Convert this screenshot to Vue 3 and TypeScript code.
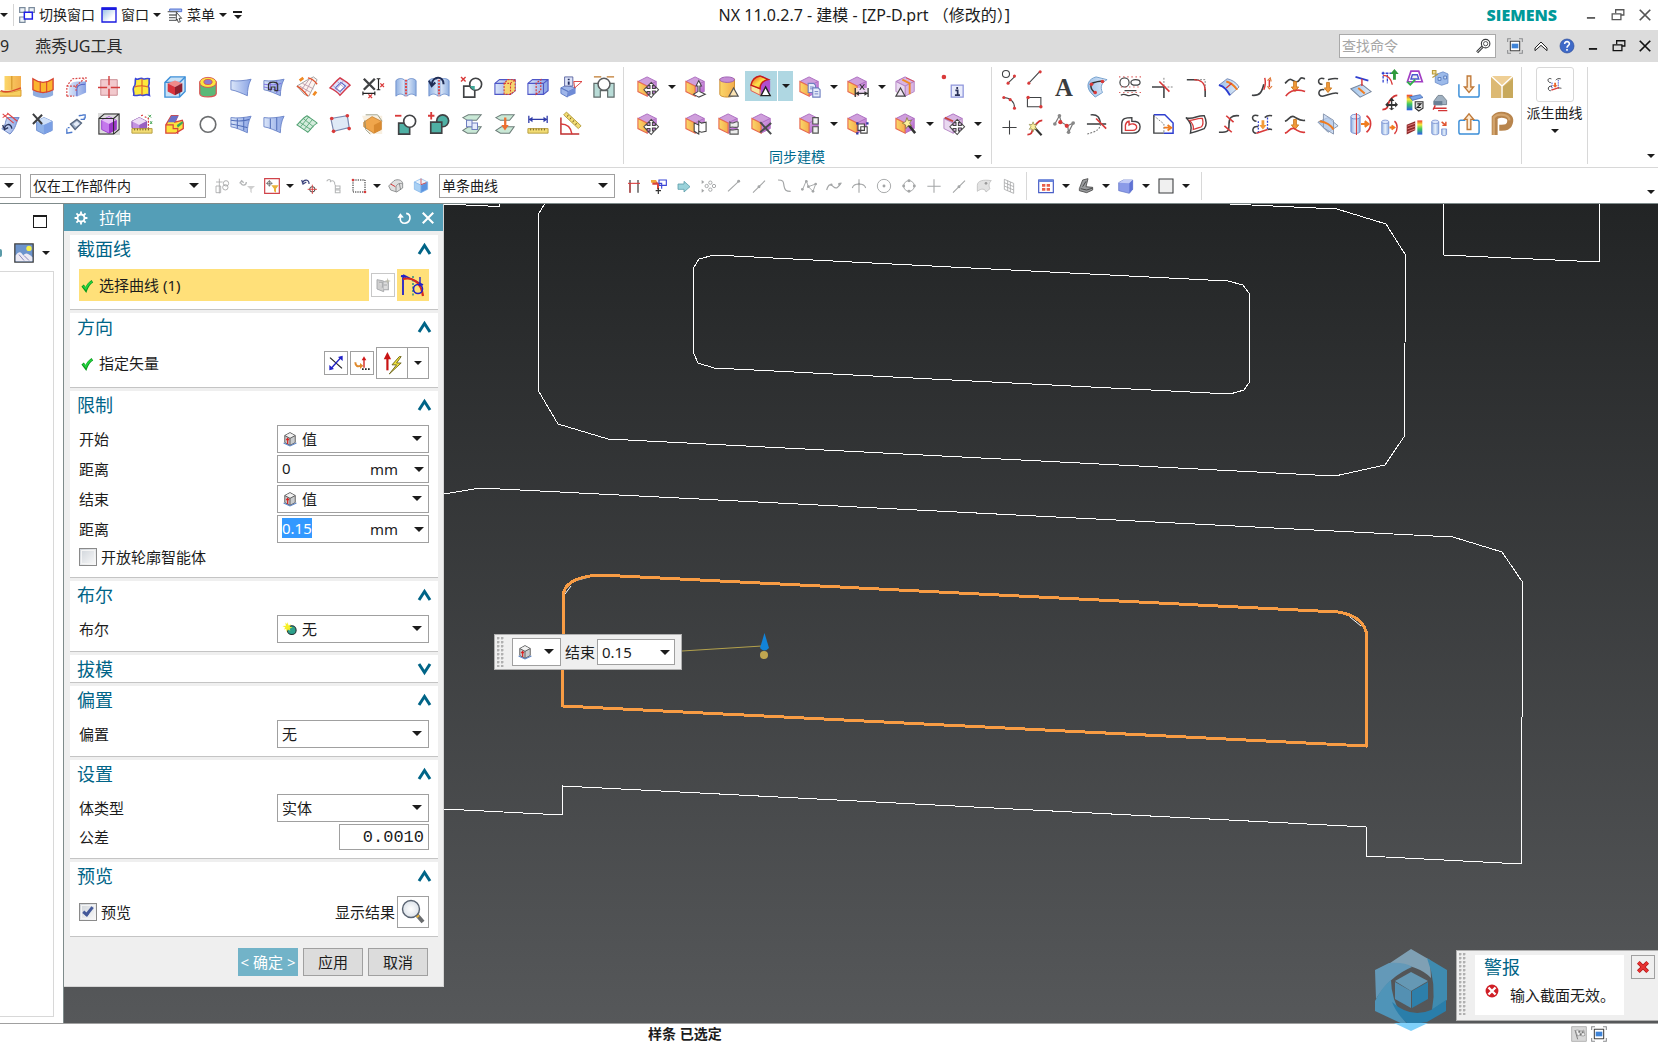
<script setup lang="ts">
import { onMounted, reactive, ref } from 'vue'

interface Tool {
  icon: string
  label: string
  menu?: boolean
  active?: boolean
}

type RowKind = 'pick' | 'vector' | 'select' | 'length' | 'check' | 'number' | 'preview'

interface Row {
  kind: RowKind
  id: string
  label: string
  value?: string
  icon?: string
}

interface Section {
  title: string
  open: boolean
  rows: Row[]
}

/* ---------- icon drawing helpers, all on a 24 x 24 grid ---------- */
const line = (d: string, stroke = '#404244', width = 1.5, fill = 'none', extra = '') =>
  `<path d="${d}" stroke="${stroke}" stroke-width="${width}" fill="${fill}" ${extra}/>`
const fill = (d: string, color: string) => `<path d="${d}" fill="${color}"/>`
const dot = (x: number, y: number, r = 2, color = '#d93a3a') => `<circle cx="${x}" cy="${y}" r="${r}" fill="${color}"/>`
const ring = (x: number, y: number, r: number, stroke = '#404244', width = 1.5, inside = 'none') =>
  `<circle cx="${x}" cy="${y}" r="${r}" stroke="${stroke}" stroke-width="${width}" fill="${inside}"/>`
const dash = 'stroke-dasharray="2 1.5"'

const cube = (top: string, left: string, right: string, edge: string) =>
  line('M12 1 22 6 12 11 2 6z', edge, 1, top) +
  line('M2 6 12 11V22L2 17z', edge, 1, left) +
  line('M12 11 22 6V17L12 22z', edge, 1, right)

const sync =
  line('M11 1 21 6 11 11 1 6z', '#a868be', 1, '#cf9fdc') +
  line('M11 11 21 6V17L11 22z', '#b070c4', 1, 'url(#violet)') +
  line('M1 6 11 11V22L1 17z', '#e86a50', 1.2, 'url(#amber)')
const syncPale =
  line('M11 1 21 6 11 11 1 6z', '#a868be', 1, '#d8b4e2') +
  line('M11 11 21 6V17L11 22z', '#b483c4', 1, '#d9b4e2') +
  line('M1 6 11 11V22L1 17z', '#b483c4', 1, '#e9d8f0')
const move =
  line('M15.500 7l3.500 3.500h-2.200v3.200H20v-2.200l3.500 3.500-3.500 3.500v-2.200h-3.200v3.200H19L15.500 23.500 12 20h2.200v-3.200H11v2.200L7.500 15 11 11.500v2.200h3.200v-3.200H12z', '#444', 1.1, '#fff')
const tri = line('M17 13 22 22.500H12z', '#222', 1.5, '#fff')
const docs =
  line('M10 8h6l2 2v8h-8z', '#6f7fc0', 1.2, '#e6ecfb') + line('M15 13h6l2 2v8h-8z', '#6f7fc0', 1.2, '#e6ecfb') +
  line('M12 12h4M12 14h3M17 17h4M17 19.500h4', '#6f7fc0', 1)
const surf = line('M1 5C8 6 16 5 23 3.500 20 9 19 15 19 21.500 13 19 7 16 1 15z', '#6c86c8', 1, 'url(#steel)')
const booklet =
  line('M1 5C4 2 8 2 11 5V22C8 19 4 19 1 22zM23 5C20 2 16 2 13 5V22C16 19 20 19 23 22z', '#6f8fcc', 1, 'url(#fold)') +
  line('M12 4v18', '#e23b3b', 2, 'none', dash)
const block = line('M1 8 6 4H23V16L18 20H1z', '#4e56c8', 1.2, 'url(#steel)') + line('M1 8H18V20M18 8 23 4', '#4e56c8', 1.2)
const ruler = line('M1 17H23V22H1z', '#b39a3a', 1, '#f2dc74') + line('M4 17v2M7 17v2M10 17v2M13 17v2M16 17v2M19 17v2', '#6d5a1c', 1)
const sheets = (inner: string) =>
  line('M2 19 8 15H22L17 22H7z', '#6d7d79', 1.1, '#c9e8d6') + line('M2 5 8 2H22L17 8H7z', '#6d7d79', 1.1, '#c9e8d6') + inner
const arrowDown = line('M10.500 7h3v6h2.500l-4 5-4-5h2.500z', '#c9781f', 1, '#f39b3b')
const wave = (y: number, color: string) => line(`M1 ${y + 4}C3 ${y + 3} 5 ${y - 2} 8 ${y}S15 ${y + 4} 17 ${y}S21 ${y - 1} 23 ${y - 1}`, color, 1.8)
const hump = (y: number, color: string) => line(`M1 ${y + 5}C5 ${y + 4} 7 ${y - 2} 11 ${y}S17 ${y + 5} 23 ${y + 4}`, color, 1.8)
const smallCyl = (x: number) =>
  line(`M${x} 4v16c0 3 10 3 10 0V4`, '#7088cc', 1, 'url(#fold)') + `<ellipse cx="${x + 5}" cy="4" rx="5" ry="2.500" fill="#dbe6fb" stroke="#7088cc"/>`
const gray = '#a3a5a6'

const icons: Record<string, string> = {
  pipe: fill('M6 0H24V16H6z', 'url(#amber)') + line('M14 0v15', '#c98a1c', 1) + line('M0 16c6 4 18 1 24-1v7H0z', '#d99726', 1, '#f6cf62') + line('M2 16c6 3 14 0 22-3', '#d94a2c', 1.5),
  sheet: fill('M1 3C8 8 16 8 23 3V21C16 25 8 25 1 21z', '#8facdf') + line('M1 3C8 8 16 8 23 3V15C16 19 8 19 1 15z', '#d8452f', 1.5, '#fbb52e') + line('M9 6v12M16 6v12', '#d8452f', 1.2),
  blend: fill('M4 21V14c0-5 4-8 9-8h10v12l-9 4H4z', 'url(#steel)') + line('M13 22V14c0-3 3-5 9-5', '#5767c9', 1.2) + line('M2 22V11L8 3l15-1v5M2 11h10l9-8M12 11v5M2 22h8', '#d84343', 1.3, 'none', dash),
  cross: fill('M3 4H21V21H3z', '#f2c9cd') + line('M3 4H21V21H3z', '#c98a90', 1) + line('M12 0v10M12 14v10M0 12.500h10M14 12.500h10', '#d33c3c', 1.5),
  patch: line('M5 3c3 2 5-2 8 0 2 1 4-1 7 0-1 3 1 5-1 8 2 3 0 6 1 10-4-2-5 1-8 0-3-1-5 1-9 0 1-4-2-5 0-9 3-3 1-6 2-9z', '#3b46d6', 1.8, '#fbe83c') + line('M12 3v18M4 12c5-2 11-1 15 0', '#e0672f', 1.3),
  redBox: line('M1 7 7 1H23V17L17 23H1z', '#3c8fd8', 1.5, '#c8e1f6') + line('M1 7H17V23M17 7 23 1', '#3c8fd8', 1.5) + fill('M12 5l8 3-8 4-8-4z', '#f08a8a') + fill('M4 8l8 4v9l-8-4z', '#d9333d') + fill('M12 12l8-4v9l-8 4z', '#8f2130'),
  can: line('M3 6v13c0 5 18 5 18 0V6', '#d95353', 1.3, '#5bb878') + '<ellipse cx="12" cy="7" rx="9" ry="5.500" fill="#fbe63e" stroke="#d95353"/><ellipse cx="12" cy="6.500" rx="4.500" ry="2.800" fill="#8d7ad0" stroke="#d95353"/>',
  surface: surf,
  surfLoop: surf + line('M1 9c7 1 14 1 19-1M1 12c7 1 13 4 18 4M8 6v11M15 5v14', '#7c6be0', 1) + line('M6 15V9c1-3 9-3 10 0v7h-3v-4H9v3z', '#333', 1.3),
  meshOrange: line('M11 5 19 1l4 3-9 18-5-2-8-9z', '#999', 1, '#fdf4f0') + line('M14 4 6 15M18 3 10 18M7 8l12 6M4 11l12 7', '#b9a', 1) + line('M1 11c4 2 8 6 12 11M13 2c6 1 8 4 10 7', '#e0522d', 1.5) + line('M4 5l4-3M19 21l3-4', '#f08a24', 3),
  rhombus: line('M1 13C5 9 8 5 12 2c4 3 8 4 11 8-4 3-7 7-11 11-3-4-7-6-11-8z', '#d33c4c', 1.5, '#dfe3fb') + line('M7 13l6-6 5 4-6 6z', '#5560c4', 1.2, '#fff') + line('M4 10l9 8M9 6l9 8M16 5l-9 11', '#9a8ac0', 0.8),
  dimX: line('M2 3 14 15M14 3 2 15', '#404244', 2.6) + line('M16 3h4M18 3v12M16 15h4M1 17v4M14 17v4M1 19h13', '#222', 1.3) + line('M20 8l4 4M24 8l-4 4M7 20l4 4M11 20l-4 4', '#d93a3a', 1.3),
  book: booklet,
  bookBack: booklet + line('M4 9c1-9 13-10 13 0M1 5l3 6 4-4', '#1f2c55', 2.2),
  subX: line('M3 11H15V23H3z', '#404244', 1.8, '#fff') + ring(16, 9, 6.5, '#404244', 1.8, '#fff') + fill('M10 11h5v4.500a6.500 6.500 0 0 1-5-4.500z', '#3fa898') + line('M0 1l5 5M5 1 0 6', '#d93a3a', 1.5),
  blockCut: block + fill('M11 8 15 4h8v12l-5 4h-7z', '#f5d672') + line('M11 20V8l4-4h8M18 8v12M11 8h7l5-4v12l-5 4h-7', '#d93a3a', 1.2, 'none', dash),
  blockDash: block + line('M10 20V8l5-4v12z', '#d93a3a', 1.3, 'none', dash),
  info3d: line('M1 13l6-3 10 3-8 4zM1 13v6l7 4 1-6z', '#5d78c4', 1, '#9fb6ea') + fill('M9 17l8-4v6l-9 4z', '#6f8bd6') + line('M5 1H14V11H5z', '#5a64a0', 1, '#dde3f8') + line('M9.500 3v1.500M9.500 6v3.500', '#222c60', 2) + line('M15 6h9l-8 7z', '#d93a3a', 1),
  clampC: line('M1 1h8M15 1h8', '#c07a2e', 1.5) + line('M1 8h6c0 8 10 8 10 0h6v15h-7v-7h-8v7H1z', '#5f6b6a', 1.3, '#b9dcd7') + ring(12, 9, 6.5, '#5a5c5e', 1.6, '#fff'),
  wrap: line('M3 17C8 14 6 10 9 5l13 0c-4 6-3 11-10 18z', '#6480c4', 1, 'url(#steel)') + line('M4 1l12 10M9 0l11 9M4 5l6-4', '#e04444', 1.2) + line('M6 18c0-6 7-8 8-1M4 13l2 5 4-2', '#2a355e', 1.5),
  cubeX: line('M5 9l8-4 9 4v10l-9 4-8-4z', '#6b8cd0', 1, '#8fb2e8') + fill('M5 9l8-4 9 4-9 4z', '#cfe0f8') + fill('M13 13l9-4v10l-9 4z', '#7a9fe4') + line('M1 1 11 12M11 2 1 12', '#3c3e40', 2.2),
  diamond: line('M6 12l7-5 5 4-7 7z', '#55657e', 1.4, '#9fb0c8') + fill('M9 12l4-3 3 3-4 3z', '#e6edf8') + line('M15 3l6-1M19 2h3v4M17 7h4V5M8 21l-6 1v-5M5 16H3', '#4a78cc', 1.4),
  cageCube: fill('M0 0H24V24H0z', '#dcdcdc') + line('M4 8l8-4 8 4v10l-8 4-8-4z', '#9a3fd0', 1, '#c478ec') + fill('M4 8l8-4 8 4-8 4z', '#e4bdf6') + fill('M12 12l8-4v10l-8 4z', '#9a38c8') + line('M1 6H17V23H1zM7 1H23V18L17 23M7 1 1 6M17 6 23 1', '#2c2c2c', 1.1),
  cubeRuler: line('M1 9l8-4 8 4v7l-8 4-8-4z', '#7d45a4', 1, '#c393e0') + fill('M1 9l8-4 8 4-8 4z', '#eddcf5') + fill('M9 13l8-4v7l-8 4z', '#9a60c2') + line('M11 3l3-1M15 4l4 2v11M19 17h3', '#d93a3a', 1.3, 'none', dash) + line('M19 2l3 3M22 2l-3 3M21 9l2 3M23 9l-2 3', '#3aa04a', 1) + ruler,
  step: line('M2 13 8 3h7l-3 7 8-2 1 3v6l-8 5H2z', '#d9443c', 1.4, '#fbe33c') + fill('M8 3h8l-4 7H4z', '#6a71c8') + fill('M14 13l6-4 1 2-6 5z', '#3fa65a') + line('M2 13h8v4h5v6', '#d9443c', 1.3),
  circle: ring(12, 12.5, 8.5, '#6c6e70', 1.8),
  surfGrid: surf + line('M1 8c7 1 14 1 20-1M1 12c7 1 13 3 18 4M8 6v11M15 5v14', '#4f6cb8', 1.1),
  surfStripe: surf + line('M8 6v11M15 5v14', '#4f6cb8', 1.1),
  meshGreen: line('M1 13C5 9 8 5 12 3c4 3 8 5 11 8-4 2-6 6-10 10-4-3-8-5-12-8z', '#4fa070', 1.1, '#d4ecdc') + line('M4 10l12 8M8 6l11 9M9 18l9-11M5 15l9-11', '#4fa070', 0.9),
  quad: line('M2 6 20 3 22 16 5 20z', '#7a8ab0', 1.3, '#dfeaf6') + dot(3, 6) + dot(20, 3) + dot(22, 17) + dot(5, 20),
  orangeBlock: fill('M0 3H22V23H8z', '#f8efe0') + line('M2 10 11 4l10 5v9l-8 4-11-7z', '#c88638', 1, '#f0a64c') + fill('M13 13l8-4v9l-8 4z', '#d98a30') + line('M4 2h13l5 7M3 8l1 10 5 5', '#8a8c70', 0.9),
  subMinus: line('M4 11H16V23H4z', '#404244', 1.8, '#4fb0a4') + ring(16, 9, 6.5, '#404244', 1.8, '#fff') + line('M0 3h7', '#d93a3a', 2),
  addPlus: ring(16, 8.5, 6.5, '#404244', 1.8, '#4fb0a4') + line('M3 10H15V22H3z', '#404244', 1.8, '#4fb0a4') + line('M0 3h7M3.500-1v8', '#d93a3a', 2),
  sheetDocs: sheets(line('M6 8h6v7H6zM12 11h6v7h-6z', '#6f7fc0', 1.1, '#e6ecfb')),
  sheetArrow: sheets(fill('M11 5h2.500v8H16l-4 6-4-6h3z', '#ec6f30')),
  measure: line('M2 3v8M22 3v8M2 7h20', '#2f3ba8', 1.4) + fill('M2 7l4-3v6zM22 7l-4-3v6z', '#2f3ba8') + ruler,
  angle: line('M1 5V23H21', '#c02f2f', 1.6) + line('M1 12c7 0 11 4 12 11', '#d93a3a', 1.6) + line('M4 2 7-1 23 14 20 17z', '#b39a3a', 1, '#f2dc74') + line('M9 2l-1 2M12 5l-1 2M15 8l-1 2M18 11l-1 2', '#6d5a1c', 1),
  syMove: sync + move,
  syPull: sync + line('M15 5l3 6h-1.800v6l6 3-7 3-6-3 5-3v-6H12z', '#444', 1.1, '#fff'),
  syCyl: line('M2 3v17c0 4 16 4 16 0V3', '#c98a2a', 1, 'url(#amber)') + '<ellipse cx="10" cy="4" rx="8" ry="3" fill="#c58ed6" stroke="#9a5ab0"/>' + line('M17 13 22 22H12z', '#555', 1.3, '#fbe4b5'),
  syRound: fill('M8 2 14 1 22 6V18L13 23 11 14z', '#b04fd0') + line('M1 11l10 4v7L1 17z', '#e2504c', 1, '#f8e7a0') + line('M1 11C2 6 5 2 11 1l9 4c-5 1-9 4-9 10z', '#c81c18', 1.6, 'url(#fire)') + tri,
  syCopy: sync + docs,
  syDim: sync + fill('M9 13h14v10H9z', '#ffffffb0') + line('M9 13v10M23 13v10M9 19h14', '#333', 1.4) + line('M14 9l5 6M19 9l-5 6', '#333', 1.2) + fill('M9 19l4-2.500v5zM23 19l-4-2.500v5z', '#333'),
  sySection: syncPale + line('M8 4l8 4v12', '#f08a24', 2) + line('M12 2l9 4', '#e2504c', 1) + line('M6 13 11 22H1z', '#444', 1.3, '#f1e6f5'),
  dotInfo: dot(1, 1, 2.5) + line('M9 10H22V23H9z', '#8f96dc', 1.4, '#e9ecfb') + line('M15.500 12v2.200M13.500 15.800h2.500v5M13 20.800h5.500', '#2a3158', 1.9),
  syOffset: sync + line('M10 11l5 2v-4l3 2 5-1v10l-5 1-3-1v3l-5-3z', '#444', 1.2, '#fff') + line('M15 13v7', '#444', 1.1),
  syReplace: sync + line('M13 10c3 3 6-2 9 0v5c-3 2-6-1-9 1zM13 18c3 2 6-1 9 0v5h-9z', '#555', 1.2, '#ececec'),
  syDelete: sync + line('M10 10 22 23M22 11 10 21', '#4a4c4e', 2.2),
  syGroup: sync + line('M15 5h6v7h-6zM15 15h6v7h-6z', '#555', 1.3, '#f0f2f0'),
  syScope: sync + line('M12 12h7v7h-7zM15 15h7v7h-7z', '#444', 1.2, '#fff') + fill('M10 10h2.500v2.500H10zM21 10h2.500v2.500H21zM10 21h2.500v2.500H10z', '#2b35a0'),
  syWand: sync + line('M14 12l8 10', '#333', 2.8) + line('M13 5l1.500 3.500L18 8l-2 3 2 3-3.500-.5L12 17l-.5-4L8 11l3.500-1.500z', '#777030', 0.8, '#fbf0a0'),
  syPaleMove: syncPale + line('M2 5l9 4', '#c8443c', 2) + move,
  profile: ring(7, 7, 5) + line('M11 19 19 11', '#404244', 1.5) + dot(10, 20, 2.2) + dot(19, 10, 2.2),
  lineSeg: line('M4 20 19 4') + dot(4, 20, 2.2) + dot(20, 4, 2.2),
  arc: line('M3 5c10 0 16 6 16 14') + dot(4, 5, 2.2) + dot(13, 8, 2.2) + dot(19, 20, 2.2),
  rect: line('M2 5H21V18H2z') + dot(3, 5, 2.4) + dot(21, 18, 2.4),
  point: line('M12 2v20M2 12h20'),
  wand: line('M2 22c9 0 5-7 10-12S17 2 23 2', '#d23434', 2.4) + line('M11 11l11 12', '#333', 3) + line('M10 4l1.500 4 4-.5-2.500 3.500 2.500 3.500-4-.5L10 18l-1.500-4-4 .5L7 11 4.500 7.500l4 .5z', '#777030', 0.8, '#fbf0a0'),
  textA: '<text x="12" y="22" font-family="Liberation Serif, serif" font-size="27" font-weight="700" text-anchor="middle" fill="#3a3c3e">A</text>',
  surfCurve: line('M5 18C-1 10 3 3 11 1l12 3c-6 3-8 8-5 14l-8 5z', '#6f9ccc', 1, 'url(#sky)') + line('M10 18C4 14 4 8 9 7s6-2 9-1', '#333', 1.6) + dot(10, 18) + dot(6, 9) + dot(18, 6),
  sketchSet: ring(6, 7, 5, '#404244', 1.3) + '<ellipse cx="18" cy="7" rx="5" ry="3" fill="none" stroke="#404244" stroke-width="1.300"/>' + line('M6 16h13M2 21c5-3 7 2 11 0s6-1 9 1', '#404244', 1.4) + line('M0 1h24M2 12h22M0 18h24', '#e06060', 1.2, 'none', 'stroke-dasharray="1.500 3"'),
  trim: line('M0 12h13v12', '#404244', 1.7) + line('M13 2v10h11', '#777', 1, 'none', dash) + line('M8 6l11 11', '#d93a3a', 1.8),
  fillet: line('M2 4h11M22 14v9', '#404244', 1.7) + line('M10 4c8 0 12 4 12 12', '#d93a3a', 1.5) + line('M13 4h9v9', '#777', 1, 'none', dash),
  bandBlue: line('M1 10C6 11 10 15 13 21L23 12C20 7 15 4 10 3z', '#7488b4', 1, 'url(#sky)') + line('M1 10c6 1 9 6 12 11', '#2a3bd0', 2) + line('M9 6c5 1 9 5 12 9', '#f07c20', 2) + line('M9 13l6-5', '#d93a3a', 1.4),
  curveUp: line('M1 21c9 1 11-4 13-12', '#404244', 1.8) + line('M14 15c2-5 2-9 1-13M20 4v8', '#d93a3a', 1.6) + line('M18 5l3-3 1 4M18 11l2 3 3-3', '#e07a3a', 1.3),
  waveDown: wave(4, '#404244') + arrowDown.replace('M10.500 7', 'M10.500 6') + line('M2 22C6 15 16 14 23 17', '#d93a3a', 1.8),
  loopDown: line('M8 3C0 0 0 10 6 9M12 4c4-1 6-2 11-1M8 15c-7-2-8 7-2 7 4 0 12-5 17-3', '#404244', 1.7) + arrowDown,
  project: line('M6 1 20 5', '#2f3fd0', 1.8) + line('M1 14 13 9 23 17 11 23z', '#76869e', 1.1, 'url(#sky)') + line('M13 3v8', '#d93a3a', 1.6) + line('M9 13l7 6', '#f07c20', 2.2),
  polyNodes: line('M2 12 7 3l2 7 7 4 1 7 5-10-6 3', '#777', 1.3) + dot(2, 12, 2, '#888') + dot(7, 3, 2, '#888') + dot(17, 21, 2, '#888') + dot(22, 11, 2, '#888') + dot(8, 10, 2.3) + dot(15, 14, 2.3),
  trimCurve: line('M1 12h21', '#404244', 1.7) + line('M5 2c8-1 10 3 11 10', '#404244', 1.5) + line('M16 12c-1 5-3 8-15 11', '#777', 1.2, 'none', dash) + line('M11 6l11 11', '#d93a3a', 1.8),
  offset2: line('M3 12C3 6 7 5 14 5v4c6 0 9 1 9 6s-3 7-8 7H3z', '#404244', 1.5) + line('M7 19v-6c1-3 3-4 4-4v4c3-2 7-1 8 1 1 3-1 5-4 5z', '#d93a3a', 1.5),
  offsetLine: line('M2 2V22H13', '#404244', 1.5) + line('M2 2h12L23 11V22H13', '#2f3fd0', 1.6) + line('M2 3 13 12v10', '#777', 1, 'none', dash) + line('M13 16h6M17 13l4 3-4 3', '#f07c20', 2),
  offsetFan: line('M1 5C8 8 14 2 21 3c3 6 3 10 0 14-5 2-8 3-15 5C8 14 6 10 1 5z', '#404244', 1.6) + line('M5 8c5 0 9-3 14-2 1 4 1 7-1 9-3 1-5 2-9 3 1-4-1-7-4-10z', '#d93a3a', 1.4),
  bridge: line('M1 21h4c7 0 7-3 7-9s2-10 11-9', '#404244', 1.7) + line('M9 3l8 7M7 14l8 7', '#d93a3a', 1.8),
  loopBlue: line('M8 3C0 0 0 9 6 9M15 5c2-2 4-3 8-2M8 15c-7-2-8 7-2 7M18 18c3-1 3 0 5 0', '#404244', 1.7) + line('M8 9v12M18 5v13', '#2f3fd0', 1.4, 'none', dash) + line('M6 22l12-4', '#d93a3a', 1.8) + fill('M11.500 8h3v5H17l-4 5-4-5h2.500z', '#f39b3b'),
  humpDown: hump(4, '#404244') + arrowDown + hump(17, '#d93a3a'),
  planes: line('M1 10 12 5 23 14 12 21z', '#8292ac', 1, 'url(#sky)') + line('M7 1 18 8V23L7 16z', '#8292ac', 1, '#b9cdec', 'fill-opacity="0.700"') + line('M3 9c7 1 12 4 15 9', '#f07c20', 2),
  cylUnwrap: smallCyl(1) + line('M7 0v24', '#d93a3a', 1.2) + line('M12 12h6M16 9l4 3-4 3', '#f07c20', 2.4) + line('M18 3c6 4 6 13 0 18', '#d93a3a', 1.8),
  axisUp: line('M1 6h14M3 4v16M9 8v12', '#2f3fd0', 1.8, 'none', 'stroke-dasharray="4 1.500"') + line('M3 9c7 0 11 4 13 13', '#d93a3a', 2) + fill('M19 0l6 7h-4v8h-4V7h-4z', '#2f9a3c'),
  redDiamond: line('M2 22c10 0 6-7 10-12S17 2 23 2', '#d23434', 2.6) + fill('M15 5l4 5h-3v4h4v-3l4 4-4 4v-2h-4v3h3l-4 3-4-3h3v-3h-4v2l-4-4 4-4v3h4v-4h-3z', '#333'),
  cylSmall: smallCyl(1) + line('M12 12h5M15 9l4 3-4 3', '#f07c20', 2.6) + line('M19 3c5 4 5 13 0 18', '#d93a3a', 2),
  trapezoid: line('M7 3H18L23 18H2z', '#a23fc4', 2.4) + line('M9 8H16L18 14H7z', '#4b56d0', 2, '#eee') + line('M2 18l4 4 7-7', '#2fb04a', 2.6),
  rainbowZ: fill('M1 1H9V23H1z', 'url(#rainbow)') + line('M5 4 20 1l4 4-15 4z', '#3a5fa8', 1, '#78a4e8') + line('M13 11H24V20L18 24 13 20z', '#333', 1.5, '#dcdcdc') + line('M16 14h5l-5 5h5', '#222', 1.6),
  redBars: fill('M1 8 13 3v13L1 22z', '#8f2a2a') + line('M2 10l11-4M2 14l11-4M2 18l11-4', '#e07a7a', 1.4) + fill('M16 2h7v20h-7z', 'url(#rainbow)'),
  cubes: line('M6 8 17 4l7 3v13l-9 3-9-4z', '#5f82c4', 1, '#9cbaea') + line('M10 12h4v4h-4zM18 10h4v4h-4z', '#4e72b8', 1.2, '#cfe0f8') + line('M2 2h5v5H2zM2 12l8-5', '#b99a3a', 1.5, '#f2dc94'),
  draft: line('M4 10 10 2h6l6 7v6H4z', '#5a6a78', 1, '#9fb0c0') + fill('M4 10h12v6H4z', '#6a7f94') + line('M6 16 3 22M4 20h18M10 23.500h13', '#d23434', 2),
  cylPair: smallCyl(1) + line('M15 14v8c0 2 7 2 7 0v-8z', '#7088cc', 1, 'url(#fold)') + line('M15 4l6 5M21 4v5h-5', '#e0522d', 2),
  importBox: line('M1 9v12q0 2 2 2h18q2 0 2-2V9', '#3c8fd8', 1.6) + line('M10 0h4v12h3l-5 6-5-6h3z', '#c07a3a', 1.5, '#fbe8cf'),
  exportBox: line('M8 8H3Q1 8 1 10v11q0 2 2 2h18q2 0 2-2V10q0-2-2-2h-5', '#3c8fd8', 1.6) + line('M10 18h4V7h3L12 1 7 7h3z', '#c07a3a', 1.5, '#fbe8cf'),
  envelope: fill('M0 0H24V24H0z', '#dcb973') + fill('M0 0H24L12 10z', '#efcf95') + fill('M13 12 24 3V24H13z', '#c8a95c') + line('M0 0 12 11 24 0M12 11V24', '#fff', 1.5),
  letterP: line('M4 24V5C8 0 22 1 21 9S14 16 9 16', '#b8854d', 6.5) + line('M3 24V5C7 0 21 1 20 8', '#d3a46c', 2.5),
  grayFlow: line('M8 1v22M3 6h10M3 12h7v10H3z', gray, 1.2) + ring(18, 8, 4, gray, 1.3) + ring(17, 14, 4, gray, 1.3),
  grayFilter: line('M3 7c0 5 8 5 8-1M1 8l3-4 3 3', '#b4b6b7', 2) + fill('M12 12h12l-5 5v6l-2-2v-4z', '#cfcfcf'),
  redFilter: line('M1 1H23V23H1z', '#d0434a', 1.8, '#fff') + ring(8, 8, 3, '#555', 1) + line('M8 3v10M3 8h10', '#555', 1) + fill('M11 11h11l-4 5v6l-3-2v-4z', '#e8b23a'),
  undoTarget: line('M2 8c2-7 11-6 10 1M1 3l2 6 5-3', '#39407a', 1.8) + ring(17, 17, 4, '#333', 1.4) + line('M17 10v14M10 17h14', '#d93a3a', 1.3),
  grayTree: line('M1 5c3-5 8-2 5 1 4-4 8-1 7 4M14 10v13M14 12h7v4h-7M14 18h7v4h-7', '#b4b6b7', 1.6),
  marquee: line('M3 3H21V21H3z', '#222', 1.5, 'none', dash) + dot(3, 3, 2) + dot(21, 21, 2),
  grayBlock: line('M1 12 9 4c6-3 12-1 13 4v7l-9 6-9-3z', '#7b7d7f', 1.2, '#e0e0e0') + line('M12 21v-8c1-4 6-6 10-4M17 8l2 10', '#7b7d7f', 1.2) + line('M4 9l7 4', '#d93a3a', 1.5),
  blueBox: cube('#e9f2fb', '#a8d0f4', '#5c94e0', '#7cb0e8') + line('M12 1v9l8-3', '#d93a3a', 1.2),
  hLines: line('M6 3v19M18 3v19', '#222', 1.6) + line('M3 8h18', '#d93a3a', 1.6) + line('M6 8v14', '#d93a3a', 1.6),
  flag: line('M12 3h11v8H12zM9 8h7v8', '#3b46d6', 1.7) + fill('M2 5h6l4 4v8H9v-7H2z', '#d9443c') + fill('M0 3h8v4H0z', '#f0a63a') + line('M11 15v9M7 19h8', '#333', 1.8),
  tealArrow: line('M3 9h9V5l9 8-9 8v-4H3z', '#5a9ca8', 1.2, '#9ad2da'),
  nodesGray: ring(14, 7, 2.5, gray, 1.4) + ring(8.5, 12, 2.5, gray, 1.4) + ring(19.5, 12, 2.5, gray, 1.4) + ring(14, 17.5, 2.5, gray, 1.4) + fill('M1 3l4 3-4 3zM1 16l4 3-4 3z', gray),
  gLine: line('M3 20 19 5', gray, 1.6) + dot(19, 5, 2.2, gray),
  gLineMid: line('M3 22 21 4', gray, 1.6) + dot(12, 13, 2.2, gray),
  gCurve: line('M3 3c9 0 8 3 9 9s3 8 10 8', gray, 1.8),
  gZig: line('M2 18 8 4l3 9 7 7 4-11-11 4', gray, 1.4) + dot(2, 17, 2, gray) + dot(8, 5, 2, gray) + dot(11, 13, 2, gray) + dot(18, 20, 2, gray) + dot(22, 9, 2, gray),
  gSpline: line('M1 18c3-10 6-9 10-5s7 2 12-6', gray, 1.8) + dot(8, 10, 1.8, gray) + dot(20, 9, 1.8, gray),
  gCross: line('M12 2v20M2 15c2-8 18-8 20 0', gray, 1.6) + dot(12, 9, 2, gray),
  gCenter: ring(12, 12, 10, gray, 1.4) + dot(12, 12, 2.2, gray),
  gQuadrant: ring(12, 12, 8, gray, 1.4) + dot(12, 4, 2.2, gray) + dot(12, 20, 2.2, gray) + dot(4, 12, 2.2, gray) + dot(20, 12, 2.2, gray),
  gPlus: line('M12 2v20M2 12.500h20', gray, 1.6),
  gFace: line('M2 20V11c0-7 9-9 21-7-4 3-4 9-2 12l-6 5c-1-5-7-6-13-1z', '#bdbdbd', 1.2, '#e2e2e2') + dot(15, 8, 2, '#999'),
  gGrid: line('M5 2 19 8V23L5 17zM10 4v15M14 6v15M5 7l14 6M5 12l14 6', gray, 1.2),
  layout: line('M1 3H23V22H1z', '#4a5fc8', 1.8, '#fff') + fill('M1 2H23V6H1z', '#6a86dc') + fill('M6 9h5v4H6zM13 9h5v4h-5zM6 15h5v4H6zM13 15h5v4h-5z', '#e8604a'),
  seat: line('M2 16 7 3l8-2-3 12 10 1v4l-9 4-11-3z', '#444', 1.2, '#9a9c9e') + line('M7 13l5-8M4 16l9 2 9-3', '#333', 1.2),
  viewCube: line('M1 7 8 3h14v14l-5 6-16-4z', '#5a6fc4', 1, '#8b9be8') + fill('M1 7l7-4h14l-5 5z', '#c3ccf6') + fill('M17 8l5-5v14l-5 6z', '#5f72d4'),
  frame: line('M1.500 1.500H22.500V22.500H1.500z', '#3a3c3e', 1.6, '#f0f0f0'),
  derived: line('M7 3C0 0 0 9 6 9M14 5c2-2 4-3 8-2M8 15c-7-2-8 7-2 7M18 18c3-1 3 0 5 0', '#404244', 1.6) + line('M8 9v11M18 5v13', '#2f3fd0', 1.6, 'none', dash) + line('M7 21l12-4', '#d93a3a', 2) + fill('M11.500 9h3v4H17l-4 4-4-4h2.500z', '#e8642c'),
  switchWin: line('M1 1h8v7H1zM15 1h8v7h-8zM1 15h8v8H1z', '#7a8a9c', 1.8, '#eef3f7') + line('M8 8h12v10H8z', '#1f1fe8', 2.2, '#fff'),
  window: line('M1.500 1.500H22.500V22.500H1.500z', '#1a1ae0', 2, 'url(#winpane)') + fill('M1 1H23V4.500H1z', '#1a1ae0'),
  menu: line('M4 3h18v4H4z', '#4a6ad0', 1.4, '#a9bdf0') + line('M1 7h16M3 12h12M3 16h10M3 20h11', '#6a6c6e', 2) + line('M14 8l8 9h-4l2 5-3 1-2-5-1 2z', '#222', 1.2, '#fff'),
  search: ring(15, 8, 6, '#3a3c3e', 1.6) + ring(15, 8, 3, '#3a3c3e', 1.2) + line('M10.500 12.500 3 20', '#3a3c3e', 4) + line('M10 13 3.500 19.500', '#fff', 1.3),
  fullscreen: line('M1 6V1h5M18 1h5v5M23 18v5h-5M6 23H1v-5', '#8a8c8e', 1.6) + line('M5 5h14v14H5z', '#444', 1.6, '#fff') + fill('M7 8.500h10v7H7z', '#3f84d8'),
  collapse: line('M3 15l9-9 9 9v4l-9-8-9 8z', '#222', 1.5, '#fff'),
  help: '<circle cx="12" cy="12" r="10.500" fill="#3f6ac8" stroke="#2a4a98"/><path d="M8.500 9c0-5 7.500-4.500 7 0-.3 2.500-3.500 2.500-3.500 5.500M12 16.500v2.500" stroke="#fff" stroke-width="2.400" fill="none"/>',
  minimize: line('M5 17h14', 'currentColor', 3),
  restore: line('M8 9V3H22V12H17', 'currentColor', 2.2) + line('M2 10H17V20H2z', 'currentColor', 2.2),
  close: line('M3 3 21 21M21 3 3 21', 'currentColor', 3),
  cubeUp: line('M3 6l9-5 9 5v12l-9 5-9-5z', '#555', 1.5, '#c9cbcd') + fill('M4 6l8-4 8 4-8 4z', '#f1f1f1') + line('M3 6l9 5 9-5M12 11v12', '#555', 1.5) + line('M8 21v-9M5.500 14l2.500-3 2 3', '#d92020', 2) + line('M1 19l11 5 11-5', '#5f86c8', 1.8),
  boolNone: ring(15, 14, 7.5, '#1c2c2c', 1.8, '#2ca08c') + fill('M8 0l1.500 6 4-2-2 4 5 1.500-5 1.500 1 4-4-2-2 4-1-5-4 1 2.500-3.500L-1 7l6-.5L4 1l3 3z', '#f6ef28'),
  picture: line('M1 1H23V23H1z', '#444', 1.6, '#6d94cc') + '<circle cx="18" cy="6.500" r="3.200" fill="#f6ef4a"/>' + fill('M2 15c4-6 7-4 9 0 3-4 6-3 11 2v5H2z', '#eceaf4') + line('M6 14l6 7M12 15l6 6', '#8a86b8', 1.2),
  grayWin: line('M3 4l10 2v16L3 18z', '#a6a8aa', 1.4, '#cfcfcf') + line('M6 8h5v8M13 7h7v12h-7M13 12h5', '#a6a8aa', 1.6, '#dcdcdc') + fill('M19 1l1 4 4 1-4 1-1 4-1-4-4-1 4-1z', '#bdbdae'),
  curveRule: line('M2 22V2M0 3l5 1M2 2l20 10', '#2222c8', 1.8) + line('M12 3v20', '#208a80', 1.4, 'none', dash) + line('M2 6c9-2 18 2 20 17', '#d92a1a', 2.2) + ring(17, 16, 4.5, '#2222c8', 1.6) + line('M19 4v9', '#2222c8', 1.4),
  flip: line('M3 4 21 20', '#222', 1.8) + line('M4 21 20 3', '#2222c8', 2) + fill('M22 1v8l-7-6zM2 23v-8l7 6z', '#2222c8'),
  dotsArrow: line('M15 19V6', '#d01818', 2) + fill('M15 2l3.500 6h-7z', '#d01818') + line('M2 11c0 6 4 7 8 5', '#e08a2c', 3) + fill('M9 12l5 4-5 5z', '#e08a2c') + fill('M12 20h2.500v2.500H12zM16.500 20H19v2.500h-2.500zM21 20h2.500v2.500H21z', '#222'),
  bolt: line('M7 20V6', '#c81414', 2.4) + fill('M7 0l4 8H3z', '#c81414') + line('M20 5l-8 9h5l-8 10 13-12h-5l5-7z', '#6a6218', 1, '#f4e63c'),
  magnifier: line('M16 15l6 7', '#6a6c6e', 4) + line('M15 14l2.500 3', '#e8b23a', 3) + ring(10, 9, 8.500, '#5a6472', 1.4, 'url(#glass)'),
  gear: ring(12, 12, 6, '#fff', 3.2) + line('M12 1v5M12 18v5M1 12h5M18 12h5M4.200 4.200l3.200 3.200M16.600 16.600l3.200 3.200M4.200 19.800l3.200-3.200M16.600 7.400l3.200-3.200', '#fff', 3.2),
  reset: line('M14 4c9 1 9 15-2 17-6 0-9-4-8-10', '#fff', 2.8) + fill('M-1 12l5-8 6 7z', '#fff'),
  whiteClose: line('M3 3 21 21M21 3 3 21', '#fff', 3.6),
  tick: line('M3 12l6 8C12 12 16 7 21 4', '#0b9a1e', 5.5) + line('M4 13l5 5C12 11 16 7 20 5', '#24d440', 3),
  redClose: line('M4 4 20 20M20 4 4 20', '#b01818', 6.5) + line('M4 4 20 20M20 4 4 20', '#e83232', 4),
  error: '<circle cx="12" cy="12" r="11" fill="#d01f26"/>' + line('M6 6 18 18M18 6 6 18', '#fff', 4),
  checker: line('M1 1H23V23H1z', '#b0b0b0', 1.4, '#d8d8d8') + line('M6 6l4 14', '#777', 1.4) + line('M7 7c4-3 7 3 12-1l2 8c-4 3-7-2-11 1z', '#888', 1, '#f0f0f0') + fill('M11 7h3v3h-3zM16 8h3v3h-3zM13 11h3v3h-3z', '#777'),
}

/* ---------- ribbon content ---------- */
const t = (icon: string, label: string, menu = false, active = false): Tool => ({ icon, label, menu, active })

const featureRows: Tool[][] = [
  [
    t('pipe', '管道'), t('sheet', '片体'), t('blend', '倒圆'), t('cross', '基准'), t('patch', '补片'), t('redBox', '包容块'),
    t('can', '圆柱'), t('surface', '曲面'), t('surfLoop', '修剪曲面'), t('meshOrange', '延伸'), t('rhombus', '偏置面'),
    t('dimX', '尺寸'), t('book', '缝合'), t('bookBack', '取消缝合'), t('subX', '相交'), t('blockCut', '拆分体'),
    t('blockDash', '分割面'), t('info3d', '信息'), t('clampC', '间隙'),
  ],
  [
    t('wrap', '包裹'), t('cubeX', '删除体'), t('diamond', '缩放'), t('cageCube', '边框'), t('cubeRuler', '测量体'), t('step', '台阶'),
    t('circle', '圆'), t('surfGrid', '网格曲面'), t('surfStripe', '直纹'), t('meshGreen', '通过网格'), t('quad', '四点曲面'),
    t('orangeBlock', '块'), t('subMinus', '减去'), t('addPlus', '合并'), t('sheetDocs', '复制面'), t('sheetArrow', '移动面'),
    t('measure', '测量距离'), t('angle', '测量角度'),
  ],
]

const syncCells: Tool[][] = [
  [
    t('syMove', '移动面', true), t('syPull', '拉出面'), t('syCyl', '调整面的大小'), t('syRound', '调整圆角', true, true),
    t('syCopy', '复制面', true), t('syDim', '线性尺寸', true), t('sySection', '编辑截面'), t('dotInfo', '关系信息'),
  ],
  [
    t('syMove', '移动'), t('syOffset', '偏置区域'), t('syReplace', '替换面'), t('syDelete', '删除面'),
    t('syGroup', '组合面', true), t('syScope', '关系范围'), t('syWand', '优化面', true), t('syPaleMove', '移动边', true),
  ],
]
const wideSync = [0, 3, 4, 5, 6, 7]

const sketchTools = [
  t('profile', '轮廓'), t('lineSeg', '直线'), t('arc', '圆弧'), t('rect', '矩形'), t('point', '点'), t('wand', '艺术样条'),
]
const curveRows: Tool[][] = [
  [
    t('textA', '文本'), t('surfCurve', '曲面上的曲线'), t('sketchSet', '草图'), t('trim', '修剪'), t('fillet', '圆角'),
    t('bandBlue', '偏置'), t('curveUp', '曲线长度'), t('waveDown', '组合投影'), t('loopDown', '投影'), t('project', '投影曲线'),
  ],
  [
    t('polyNodes', '多边形'), t('trimCurve', '修剪曲线'), t('offset2', '偏置曲线'), t('offsetLine', '移动曲线'), t('offsetFan', '偏置面内'),
    t('bridge', '桥接曲线'), t('loopBlue', '派生'), t('humpDown', '简化'), t('planes', '相交曲线'), t('cylUnwrap', '缠绕'),
  ],
]
const analysisTools = [
  t('axisUp', '坐标'), t('trapezoid', '检查'), t('cubes', '装配'), t('redDiamond', '编辑'), t('rainbowZ', '厚度'),
  t('draft', '拔模'), t('cylSmall', '展开'), t('redBars', '分析'), t('cylPair', '替换'),
]
const ioRows: Tool[][] = [
  [t('importBox', '导入'), t('envelope', '模架')],
  [t('exportBox', '导出'), t('letterP', '部件')],
]

const pickTools = [
  t('grayFlow', '过滤'), t('grayFilter', '重置过滤器'), t('redFilter', '选择过滤器', true), t('undoTarget', '取消选择'),
  t('grayTree', '向上一级'), t('marquee', '框选', true), t('grayBlock', '隐藏边'), t('blueBox', '体选择'),
]
const snapTools = [
  t('hLines', '在相交处停止'), t('flag', '跟随圆角'), t('tealArrow', '特征内'), t('nodesGray', '启用捕捉点'), t('gLine', '端点'),
  t('gLineMid', '中点'), t('gCurve', '控制点'), t('gZig', '极点'), t('gSpline', '样条点'), t('gCross', '交点'),
  t('gCenter', '圆心'), t('gQuadrant', '象限点'), t('gPlus', '现有点'), t('gLineMid', '曲线上的点'), t('gFace', '面上的点'), t('gGrid', '栅格'),
]
const viewTools = [t('layout', '布局'), t('seat', '渲染'), t('viewCube', '视图'), t('frame', '背景')]

/* ---------- extrude dialog ---------- */
const sections = reactive<Section[]>([
  { title: '截面线', open: true, rows: [{ kind: 'pick', id: 'curve', label: '选择曲线 (1)' }] },
  { title: '方向', open: true, rows: [{ kind: 'vector', id: 'vector', label: '指定矢量' }] },
  {
    title: '限制',
    open: true,
    rows: [
      { kind: 'select', id: 'start', label: '开始', value: '值', icon: 'cubeUp' },
      { kind: 'length', id: 'start-distance', label: '距离', value: '0' },
      { kind: 'select', id: 'end', label: '结束', value: '值', icon: 'cubeUp' },
      { kind: 'length', id: 'end-distance', label: '距离', value: '0.15' },
      { kind: 'check', id: 'open-profile', label: '开放轮廓智能体' },
    ],
  },
  { title: '布尔', open: true, rows: [{ kind: 'select', id: 'boolean', label: '布尔', value: '无', icon: 'boolNone' }] },
  { title: '拔模', open: false, rows: [] },
  { title: '偏置', open: true, rows: [{ kind: 'select', id: 'offset', label: '偏置', value: '无' }] },
  {
    title: '设置',
    open: true,
    rows: [
      { kind: 'select', id: 'body-type', label: '体类型', value: '实体' },
      { kind: 'number', id: 'tolerance', label: '公差', value: '0.0010' },
    ],
  },
  { title: '预览', open: true, rows: [{ kind: 'preview', id: 'preview', label: '预览' }] },
])

const showPreview = ref(true)
const openProfile = ref(false)
const dialog = ref<HTMLElement | null>(null)

onMounted(() => {
  dialog.value?.querySelector<HTMLInputElement>('#end-distance')?.select()
})
</script>

<template>
  <div class="app">
    <svg class="defs" aria-hidden="true">
      <defs>
        <linearGradient id="amber"><stop offset="0" stop-color="#fbd76a" /><stop offset="1" stop-color="#f3ad4c" /></linearGradient>
        <linearGradient id="violet" x1="0" y1="0" x2="0.6" y2="1"><stop offset="0" stop-color="#dcb4e8" /><stop offset="1" stop-color="#b45fcc" /></linearGradient>
        <linearGradient id="steel"><stop offset="0" stop-color="#dbe6f9" /><stop offset="1" stop-color="#88a2e4" /></linearGradient>
        <linearGradient id="sky"><stop offset="0" stop-color="#9cc0e8" /><stop offset="1" stop-color="#e2ecf9" /></linearGradient>
        <linearGradient id="fold"><stop offset="0" stop-color="#8fb0e2" /><stop offset="0.5" stop-color="#e9f1fc" /><stop offset="1" stop-color="#8fb0e2" /></linearGradient>
        <linearGradient id="fire" x1="0" y1="0" x2="1" y2="1"><stop offset="0" stop-color="#f03a1c" /><stop offset="0.5" stop-color="#fbe24a" /><stop offset="1" stop-color="#f09a2c" /></linearGradient>
        <linearGradient id="winpane" x1="0" y1="0" x2="1" y2="1"><stop offset="0.1" stop-color="#9fc4e6" /><stop offset="0.7" stop-color="#fff" /></linearGradient>
        <linearGradient id="rainbow" x1="0" y1="0" x2="0" y2="1"><stop offset="0" stop-color="#f03a2c" /><stop offset="0.3" stop-color="#f6e83c" /><stop offset="0.6" stop-color="#3cc860" /><stop offset="1" stop-color="#2c5ae8" /></linearGradient>
        <radialGradient id="glass"><stop offset="0" stop-color="#fff" /><stop offset="1" stop-color="#dde3ea" /></radialGradient>
      </defs>
    </svg>

    <header class="titlebar">
      <div class="quick">
        <i class="caret small"></i>
        <span class="bar"></span>
        <button class="q"><svg viewBox="0 0 24 24" v-html="icons.switchWin"></svg>切换窗口</button>
        <button class="q"><svg viewBox="0 0 24 24" v-html="icons.window"></svg>窗口<i class="caret small"></i></button>
        <button class="q"><svg viewBox="0 0 24 24" v-html="icons.menu"></svg>菜单<i class="caret small"></i></button>
        <button class="more" aria-label="更多"><i class="caret small"></i></button>
      </div>
      <h1>NX 11.0.2.7 - 建模 - [ZP-D.prt （修改的）]</h1>
      <span class="brand">SIEMENS</span>
      <div class="controls">
        <button v-for="c in ['minimize', 'restore', 'close']" :key="c" :aria-label="c"><svg viewBox="0 0 24 24" v-html="icons[c]"></svg></button>
      </div>
    </header>

    <nav class="tabs">
      <a href="#">9</a>
      <a href="#">燕秀UG工具</a>
      <label class="find">
        <input type="text" placeholder="查找命令" aria-label="查找命令" />
        <svg viewBox="0 0 24 24" v-html="icons.search"></svg>
      </label>
      <div class="controls tabs-controls">
        <button v-for="c in ['fullscreen', 'collapse', 'help', 'minimize', 'restore', 'close']" :key="c" :class="c" :aria-label="c">
          <svg viewBox="0 0 24 24" v-html="icons[c]"></svg>
        </button>
      </div>
    </nav>

    <section class="ribbon">
      <div class="group features">
        <div v-for="(row, r) in featureRows" :key="r" class="line">
          <button v-for="tool in row" :key="tool.icon" class="tool" :aria-label="tool.label"><svg viewBox="0 0 24 24" v-html="icons[tool.icon]"></svg></button>
          <span v-if="r === 1" class="tool"></span>
        </div>
      </div>
      <div class="group sync">
        <div v-for="(row, r) in syncCells" :key="r" class="line">
          <div v-for="(tool, c) in row" :key="c" class="cell" :class="{ wide: wideSync.includes(c), active: tool.active }">
            <button class="tool" :aria-label="tool.label"><svg viewBox="0 0 24 24" v-html="icons[tool.icon]"></svg></button>
            <button v-if="tool.menu" class="drop" :aria-label="tool.label + '选项'"><i class="caret small"></i></button>
          </div>
        </div>
        <div class="caption"><span>同步建模</span><i class="caret small"></i></div>
      </div>
      <div class="group curves">
        <div class="minis two">
          <button v-for="tool in sketchTools" :key="tool.icon" class="mini" :aria-label="tool.label"><svg viewBox="0 0 24 24" v-html="icons[tool.icon]"></svg></button>
        </div>
        <div>
          <div v-for="(row, r) in curveRows" :key="r" class="line">
            <button v-for="tool in row" :key="tool.icon" class="tool" :aria-label="tool.label"><svg viewBox="0 0 24 24" v-html="icons[tool.icon]"></svg></button>
          </div>
        </div>
        <div class="minis three">
          <button v-for="tool in analysisTools" :key="tool.icon" class="mini" :aria-label="tool.label"><svg viewBox="0 0 24 24" v-html="icons[tool.icon]"></svg></button>
        </div>
        <div>
          <div v-for="(row, r) in ioRows" :key="r" class="line">
            <button v-for="tool in row" :key="tool.icon" class="tool" :aria-label="tool.label"><svg viewBox="0 0 24 24" v-html="icons[tool.icon]"></svg></button>
          </div>
        </div>
      </div>
      <div class="group derive">
        <button>
          <span class="tile"><svg viewBox="0 0 24 24" v-html="icons.derived"></svg></span>
          派生曲线
          <i class="caret small"></i>
        </button>
      </div>
      <div class="ribbon-end"><i class="caret small"></i></div>
    </section>

    <section class="pickbar">
      <div class="combo stub"><select aria-label="类型过滤器"><option></option></select></div>
      <div class="combo mid"><select aria-label="选择范围"><option>仅在工作部件内</option></select></div>
      <div class="icons picks">
        <template v-for="tool in pickTools" :key="tool.icon">
          <button class="mini" :aria-label="tool.label"><svg viewBox="0 0 24 24" v-html="icons[tool.icon]"></svg></button>
          <i v-if="tool.menu" class="caret small spaced"></i>
        </template>
      </div>
      <div class="combo mid"><select aria-label="曲线规则"><option>单条曲线</option></select></div>
      <div class="icons snaps">
        <button v-for="tool in snapTools" :key="tool.label" class="mini" :aria-label="tool.label"><svg viewBox="0 0 24 24" v-html="icons[tool.icon]"></svg></button>
      </div>
      <div class="icons views">
        <template v-for="tool in viewTools" :key="tool.icon">
          <button class="mini" :aria-label="tool.label"><svg viewBox="0 0 24 24" v-html="icons[tool.icon]"></svg></button>
          <i class="caret small spaced"></i>
        </template>
      </div>
      <i class="caret small bar-end"></i>
    </section>

    <main class="work">
      <aside class="side">
        <div class="side-top"><span class="pane"></span></div>
        <div class="side-tools">
          <span class="knob"></span>
          <button aria-label="图片"><svg viewBox="0 0 24 24" v-html="icons.picture"></svg><i class="caret small"></i></button>
        </div>
        <div class="side-list"></div>
      </aside>

      <div class="viewport">
        <svg class="drawing" viewBox="64 204 1594 819" preserveAspectRatio="xMinYMin slice" aria-hidden="true">
          <g fill="none" stroke="#fff" stroke-width="1" shape-rendering="crispEdges">
            <path d="M444 204 499 206.500V204" />
            <path d="M544.500 204 538.500 214V391L558 424 608 439 1335 476 1385 465 1404.500 436 1405.500 255 1386 224 1337 209 1230 204" />
            <path d="M693.500 268 699 259 714 255 1228 281 1243 285 1249.500 294V382L1244 390 1230 394 714 368 698 363 693.500 353z" />
            <path d="M1443.500 204V255L1599.500 262V204" />
            <path d="M444 494 480 488 1453 537 1502 552 1522.500 582 1521.500 864 1366 856V827L562.500 786V815L444 809" />
          </g>
          <path d="M565 594 571 586M578 580 589 577M1350 617 1361 626" fill="none" stroke="#fff" stroke-width="1" />
          <path d="M562.500 706 563.500 593Q567 577 600 575L1338 612Q1365 616 1367 637L1366.500 746z" fill="none" stroke="#f89c44" stroke-width="3" stroke-linejoin="round" shape-rendering="crispEdges" />
          <path d="M682 651 762 646" stroke="#b3a14c" fill="none" />
          <path d="M764.500 633 769 648Q764 653 760 648z" fill="#1283d8" />
          <circle cx="764" cy="655" r="4" fill="#c0a650" />
        </svg>

        <section ref="dialog" class="dialog" role="dialog" aria-label="拉伸">
          <header>
            <svg viewBox="0 0 24 24" v-html="icons.gear"></svg>
            <h2>拉伸</h2>
            <button aria-label="重置"><svg viewBox="0 0 24 24" v-html="icons.reset"></svg></button>
            <button aria-label="关闭"><svg viewBox="0 0 24 24" v-html="icons.whiteClose"></svg></button>
          </header>

          <div class="sections">
            <section v-for="sec in sections" :key="sec.title" class="sec">
              <button class="sec-head" :aria-expanded="sec.open" @click="sec.open = !sec.open">
                {{ sec.title }}
                <svg viewBox="0 0 15 12"><path :d="sec.open ? 'M2 11 7.500 2.500 13 11' : 'M2 1 7.500 9.500 13 1'" /></svg>
              </button>
              <div v-if="sec.open && sec.rows.length" class="rows">
                <div v-for="row in sec.rows" :key="row.id" class="row" :class="row.kind">
                  <template v-if="row.kind === 'pick'">
                    <button class="picked"><svg viewBox="0 0 24 24" v-html="icons.tick"></svg>{{ row.label }}</button>
                    <button class="sq faint" aria-label="绘制截面"><svg viewBox="0 0 24 24" v-html="icons.grayWin"></svg></button>
                    <button class="big gold" aria-label="曲线"><svg viewBox="0 0 24 24" v-html="icons.curveRule"></svg></button>
                  </template>

                  <template v-else-if="row.kind === 'vector'">
                    <span class="named"><svg viewBox="0 0 24 24" v-html="icons.tick"></svg>{{ row.label }}</span>
                    <button class="sq" aria-label="反向"><svg viewBox="0 0 24 24" v-html="icons.flip"></svg></button>
                    <button class="sq" aria-label="矢量对话框"><svg viewBox="0 0 24 24" v-html="icons.dotsArrow"></svg></button>
                    <div class="split">
                      <button aria-label="自动判断的矢量"><svg viewBox="0 0 24 24" v-html="icons.bolt"></svg></button>
                      <button class="split-drop" aria-label="矢量类型"><i class="caret small"></i></button>
                    </div>
                  </template>

                  <template v-else-if="row.kind === 'select'">
                    <label :for="row.id">{{ row.label }}</label>
                    <div class="combo field" :class="{ pictured: row.icon }">
                      <svg v-if="row.icon" viewBox="0 0 24 24" v-html="icons[row.icon]"></svg>
                      <select :id="row.id"><option>{{ row.value }}</option></select>
                    </div>
                  </template>

                  <template v-else-if="row.kind === 'length'">
                    <label :for="row.id">{{ row.label }}</label>
                    <div class="field length-box">
                      <input :id="row.id" v-model="row.value" type="text" />
                      <span>mm</span>
                      <button aria-label="表达式"><i class="caret"></i></button>
                    </div>
                  </template>

                  <template v-else-if="row.kind === 'number'">
                    <label :for="row.id">{{ row.label }}</label>
                    <input :id="row.id" v-model="row.value" class="tolerance" type="text" />
                  </template>

                  <template v-else-if="row.kind === 'check'">
                    <input :id="row.id" v-model="openProfile" type="checkbox" />
                    <label :for="row.id">{{ row.label }}</label>
                  </template>

                  <template v-else>
                    <input :id="row.id" v-model="showPreview" type="checkbox" />
                    <label :for="row.id">{{ row.label }}</label>
                    <label class="result" for="show-result">显示结果</label>
                    <button id="show-result" class="big"><svg viewBox="0 0 24 24" v-html="icons.magnifier"></svg></button>
                  </template>
                </div>
              </div>
            </section>
          </div>

          <footer>
            <button class="ok">&lt; 确定 &gt;</button>
            <button>应用</button>
            <button>取消</button>
          </footer>
        </section>

        <div class="floating">
          <span class="grip"></span>
          <div class="combo kind"><svg viewBox="0 0 24 24" v-html="icons.cubeUp"></svg><select aria-label="限制类型"><option></option></select></div>
          <label for="float-end">结束</label>
          <div class="float-box">
            <input id="float-end" type="text" value="0.15" />
            <button aria-label="结束选项"><i class="caret"></i></button>
          </div>
        </div>

        <svg class="emblem" viewBox="0 0 72 82" aria-hidden="true">
          <path d="M15 14 36 0 55 11 56 29Q44 16 15 14z" fill="#7fa0b4" />
          <path d="M0 21 14 14Q30 13 37 18 15 27 1 50z" fill="#6499b8" />
          <path d="M52 9 72 21V51L57 61Q62 35 52 9z" fill="#3f8bb0" />
          <path d="M0 52Q7 38 16 31 16 54 34 78L0 62z" fill="#4f94b8" />
          <path d="M17 53Q36 70 56 61L71 51V62L52 73 34 76Q22 66 17 53z" fill="#2a7eaa" />
          <path d="M19 74H53L36 82z" fill="#7fd0fa" />
          <path d="M20 32 36 23 53 32 36 42z" fill="#6598b4" />
          <path d="M20 33 36 42V59L20 50z" fill="#5490b2" />
          <path d="M53 33 37 42V59L53 50z" fill="#2d7faa" />
        </svg>

        <section class="alert" role="alert">
          <span class="grip"></span>
          <div class="alert-body">
            <h3>警报</h3>
            <p><svg viewBox="0 0 24 24" v-html="icons.error"></svg>输入截面无效。</p>
          </div>
          <button aria-label="关闭警报"><svg viewBox="0 0 24 24" v-html="icons.redClose"></svg></button>
        </section>
      </div>
    </main>

    <footer class="status">
      <span></span>
      <strong>样条 已选定</strong>
      <div>
        <svg viewBox="0 0 24 24" v-html="icons.checker"></svg>
        <svg viewBox="0 0 24 24" v-html="icons.fullscreen"></svg>
      </div>
    </footer>
  </div>
</template>

<style>
body {
  margin: 0;
}
</style>

<style scoped>
.app {
  display: flex;
  flex-direction: column;
  min-height: 100vh;
  overflow: hidden;
  background: #fff;
  color: #1c1c1c;
  font: 15px/20px 'Noto Sans', 'Noto Sans CJK SC', sans-serif;
}
.app *,
.app *::after {
  box-sizing: border-box;
}
.defs {
  position: absolute;
  width: 0;
  height: 0;
}
button,
input,
select {
  margin: 0;
  padding: 0;
  border: 0;
  border-radius: 0;
  outline: 0;
  background: none;
  color: inherit;
  font: inherit;
}
svg {
  display: block;
  flex: none;
  overflow: visible;
}
h1,
h2,
h3,
p {
  margin: 0;
  font-weight: 400;
}
.caret {
  flex: none;
  width: 0;
  height: 0;
  border: 5px solid transparent;
  border-top-color: #1c1c1c;
  border-bottom: 0;
}
.caret.small {
  border-width: 4px 4px 0;
}

/* title bar */
.titlebar {
  display: flex;
  align-items: center;
  height: 30px;
}
.quick {
  display: flex;
  align-items: center;
  font-size: 14px;
}
.bar {
  width: 1px;
  height: 22px;
  margin: 0 5px;
  background: #d5d5d5;
}
.q {
  display: flex;
  align-items: center;
  gap: 4px;
  margin-right: 6px;
}
.q svg {
  width: 16px;
  height: 16px;
}
.more {
  display: flex;
  justify-content: center;
  width: 9px;
  padding-top: 2px;
  border-top: 2px solid #1c1c1c;
}
.titlebar h1 {
  flex: 1;
  font-size: 16px;
  text-align: center;
}
.brand {
  color: #009999;
  font: 800 16px/20px 'Open Sans', 'Noto Sans', sans-serif;
}
.controls {
  display: flex;
  margin-left: 20px;
  color: #555;
}
.controls button {
  display: grid;
  place-items: center;
  width: 27px;
  height: 28px;
}
.controls svg {
  width: 14px;
  height: 14px;
}

/* tabs */
.tabs {
  display: flex;
  align-items: center;
  height: 32px;
  background: #dcdcdc;
}
.tabs a {
  margin-right: 26px;
  color: #2a2a2a;
  font-size: 16px;
  text-decoration: none;
}
.find {
  display: flex;
  align-items: center;
  width: 157px;
  height: 24px;
  margin-left: auto;
  padding: 0 3px 0 2px;
  border: 1px solid #a9a9a9;
  background: #fff;
}
.find input {
  width: 100%;
  min-width: 0;
  font-size: 14px;
}
.find input::placeholder {
  color: #a5a5a5;
}
.find svg {
  width: 17px;
  height: 17px;
}
.tabs-controls {
  margin-left: 6px;
  color: #111;
}
.tabs-controls button {
  width: 26px;
}
.tabs-controls .fullscreen svg,
.tabs-controls .collapse svg,
.tabs-controls .help svg {
  width: 16px;
  height: 16px;
}

/* ribbon */
.ribbon {
  display: flex;
  height: 106px;
  border-bottom: 1px solid #d8d8d8;
}
.group {
  flex: none;
  height: 97px;
  margin-top: 5px;
  padding-top: 1px;
  border-right: 1px solid #d8d8d8;
}
.features {
  width: 624px;
  padding-right: 3px;
  overflow: hidden;
}
.line {
  display: flex;
  height: 37px;
}
.features .line {
  justify-content: flex-end;
}
.tool {
  display: grid;
  flex: none;
  place-items: center;
  width: 33px;
  height: 37px;
}
.tool svg {
  width: 22px;
  height: 22px;
}
.sync {
  width: 368px;
  padding-left: 7px;
}
.cell {
  display: flex;
  align-items: center;
}
.cell.wide {
  width: 48px;
}
.cell.active {
  height: 30px;
  margin: 3px 0 4px;
  background: #afd7e2;
}
.cell.active .tool {
  height: 30px;
  border-right: 1px solid #fff;
}
.drop {
  display: grid;
  place-items: center;
  width: 15px;
  height: 28px;
}
.caption {
  display: flex;
  align-items: center;
  justify-content: center;
  padding: 5px 9px 0 0;
  color: #006a8e;
  font-size: 14px;
}
.caption span {
  flex: 1;
  padding-right: 11px;
  text-align: center;
}
.curves {
  display: flex;
  width: 530px;
  padding-left: 5px;
}
.minis {
  display: grid;
  grid-auto-rows: 25px;
  align-content: start;
}
.minis.two {
  grid-template-columns: repeat(2, 25px);
}
.minis.three {
  grid-template-columns: repeat(3, 25px);
}
.mini {
  display: grid;
  flex: none;
  place-items: center;
  width: 25px;
  height: 25px;
}
.mini svg {
  width: 17px;
  height: 17px;
}
.minis .mini {
  align-items: start;
  padding-top: 1px;
}
.derive {
  width: 66px;
  padding-top: 0;
}
.derive button {
  display: flex;
  flex-direction: column;
  align-items: center;
  width: 100%;
  font-size: 14px;
}
.tile {
  display: grid;
  place-items: center;
  width: 38px;
  height: 35px;
  margin-bottom: 1px;
  border: 1px solid #d8d8d8;
  border-radius: 3px;
}
.tile svg {
  width: 15px;
  height: 15px;
}
.derive .caret {
  margin-top: 6px;
}
.ribbon-end {
  display: flex;
  flex: 1;
  align-items: flex-end;
  justify-content: flex-end;
  padding: 0 3px 9px;
}

/* selection bar */
.pickbar {
  display: flex;
  align-items: center;
  height: 36px;
  border-bottom: 1px solid #7f8b8b;
  font-size: 14px;
}
.combo {
  position: relative;
  flex: none;
  height: 24px;
  border: 1px solid #a0a0a0;
  background: #fff;
}
.combo::after {
  position: absolute;
  top: 50%;
  right: 6px;
  margin-top: -3px;
  border: 5px solid transparent;
  border-top-color: #1c1c1c;
  border-bottom: 0;
  content: '';
  pointer-events: none;
}
.combo select {
  display: block;
  width: 100%;
  height: 100%;
  padding-left: 2px;
  appearance: none;
}
.stub {
  width: 21px;
  margin-right: 9px;
  border-left: 0;
}
.mid {
  width: 176px;
}
.icons {
  display: flex;
  align-items: center;
}
.picks {
  margin: 0 6px 0 3px;
}
.snaps {
  margin: 0 5px 0 6px;
}
.icons .mini svg {
  width: 16px;
  height: 16px;
}
.views {
  height: 28px;
  padding: 0 9px 0 5px;
  border-right: 1px solid #d8d8d8;
  border-left: 1px solid #d8d8d8;
}
.views .mini {
  width: 28px;
}
.mini + .spaced {
  margin: 0 2px;
}
.bar-end {
  margin: 12px 3px 0 auto;
}

/* work area */
.work {
  display: flex;
  flex: 1;
}
.side {
  display: flex;
  flex: none;
  flex-direction: column;
  width: 64px;
  border-right: 1px solid #7f8b8b;
}
.side-top {
  display: flex;
  justify-content: flex-end;
  padding: 11px 16px 0 0;
}
.pane {
  width: 14px;
  height: 13px;
  border: 1px solid #1c1c1c;
  border-top-width: 2px;
}
.side-tools {
  display: flex;
  align-items: center;
  padding: 15px 0 8px;
}
.knob {
  width: 2px;
  height: 8px;
  margin-right: 11px;
  border-radius: 0 4px 4px 0;
  background: #5a9aa8;
}
.side-tools button {
  display: flex;
  align-items: center;
  gap: 7px;
}
.side-tools svg {
  width: 22px;
  height: 20px;
}
.side-list {
  flex: 1;
  margin: 0 9px 6px 0;
  border: 1px solid #d8d8d8;
  border-left: 0;
}
.viewport {
  position: relative;
  display: flex;
  flex: 1;
  align-items: flex-start;
  min-width: 0;
  background: linear-gradient(#222425, #56585a);
}
.drawing {
  position: absolute;
  inset: 0;
  width: 100%;
  height: 100%;
  overflow: hidden;
}

/* dialog */
.dialog {
  position: relative;
  width: 380px;
  border-right: 1px solid #d5d5d5;
  border-bottom: 1px solid #d5d5d5;
  background: #efefef;
}
.dialog > header {
  display: flex;
  align-items: center;
  height: 27px;
  padding: 0 4px 0 10px;
  background: #549eb7;
  color: #fff;
}
.dialog > header svg {
  width: 14px;
  height: 14px;
}
.dialog > header button {
  display: grid;
  place-items: center;
  width: 23px;
  height: 24px;
}
.dialog h2 {
  flex: 1;
  margin-left: 11px;
  font-size: 16px;
}
.sections {
  display: flex;
  flex-direction: column;
  gap: 3px;
  padding: 4px 5px 0 6px;
}
.sec {
  border-bottom: 1px solid #c4c4c4;
  background: #fff;
}
.sec-head {
  display: flex;
  align-items: center;
  justify-content: space-between;
  width: 100%;
  height: 27px;
  padding: 1px 6px 0 7px;
  color: #006487;
  font-size: 18px;
  line-height: 26px;
}
.sec-head svg {
  width: 15px;
  height: 12px;
  fill: none;
  stroke: #006487;
  stroke-width: 3;
}
.rows {
  display: flex;
  flex-direction: column;
  gap: 2px;
  padding: 7px 9px 8px;
}
.row {
  display: flex;
  align-items: center;
}
.row.pick,
.row.vector {
  gap: 2px;
}
.picked,
.named {
  display: flex;
  flex: 1;
  align-items: center;
  gap: 5px;
  height: 32px;
  padding-left: 2px;
}
.picked {
  background: #ffe079;
}
.picked svg,
.named svg {
  width: 13px;
  height: 13px;
}
.sq,
.big {
  display: grid;
  flex: none;
  place-items: center;
  width: 24px;
  height: 24px;
  border: 1px solid #a0a0a0;
  background: #fff;
}
.sq svg {
  width: 16px;
  height: 16px;
}
.sq.faint {
  border-color: #c8c8c8;
}
.big {
  width: 32px;
  height: 32px;
}
.big svg {
  width: 24px;
  height: 24px;
}
.big.gold {
  border: 0;
  background: #ffe079;
}
.split {
  display: flex;
  width: 53px;
  height: 32px;
  border: 1px solid #a0a0a0;
}
.split button {
  display: grid;
  flex: 1;
  place-items: center;
}
.split .split-drop {
  flex: none;
  width: 21px;
  border-left: 1px solid #a0a0a0;
}
.split button svg {
  width: 22px;
  height: 22px;
}
.row.select,
.row.length,
.row.number {
  justify-content: space-between;
}
.field {
  width: 152px;
  height: 28px;
}
.field select {
  padding-left: 4px;
}
.pictured svg {
  position: absolute;
  top: 6px;
  left: 5px;
  width: 14px;
  height: 14px;
}
.pictured select {
  padding-left: 24px;
}
.length-box {
  display: flex;
  align-items: center;
  padding: 0 4px;
  border: 1px solid #a0a0a0;
}
.length-box input {
  flex: 1;
  min-width: 0;
  padding-bottom: 2px;
}
.length-box input::selection {
  background: #3399ff;
  color: #fff;
}
.length-box button {
  display: grid;
  place-items: center;
  margin-left: 16px;
}
.tolerance {
  width: 90px;
  height: 26px;
  padding-right: 4px;
  border: 1px solid #a0a0a0;
  font: 17px/20px 'Liberation Mono', monospace;
  text-align: right;
}
.row.check {
  height: 24px;
}
input[type='checkbox'] {
  position: relative;
  flex: none;
  width: 18px;
  height: 18px;
  margin-right: 4px;
  border: 1px solid #8a8a8a;
  outline: 1px solid #f4f4f4;
  outline-offset: -3px;
  appearance: none;
  background: linear-gradient(135deg, #cfd4da, #fafafa);
}
input[type='checkbox']:checked::after {
  position: absolute;
  top: 1px;
  left: 5px;
  width: 6px;
  height: 11px;
  border: solid #44599a;
  border-width: 0 3px 3px 0;
  content: '';
  transform: rotate(38deg);
}
.result {
  margin: 0 2px 0 auto;
}
.dialog footer {
  display: flex;
  justify-content: flex-end;
  gap: 5px;
  padding: 11px 15px 10px;
}
.dialog footer button {
  width: 60px;
  height: 28px;
  border: 1px solid #a0a0a0;
  background: #dcdcdc;
  white-space: nowrap;
}
.dialog footer .ok {
  border-color: #72b3c8;
  background: #72b3c8;
  color: #fff;
}

/* on-screen input */
.floating {
  position: absolute;
  top: 430px;
  left: 430px;
  display: flex;
  align-items: center;
  width: 188px;
  height: 36px;
  padding: 0 6px 0 2px;
  border: 1px solid #b0b0b0;
  background: #efefef;
}
.grip {
  flex: none;
  align-self: stretch;
  width: 8px;
  margin: 2px 7px 2px 0;
  background: radial-gradient(circle at 1px 1px, #b0b0b0 1px, transparent 2px) 0 0 / 4px 4px;
}
.kind {
  width: 49px;
  height: 28px;
  margin-right: 4px;
}
.kind svg {
  position: absolute;
  top: 6px;
  left: 5px;
  width: 14px;
  height: 14px;
}
.floating label {
  flex: 1;
}
.float-box {
  display: flex;
  align-items: center;
  width: 78px;
  height: 26px;
  padding: 0 4px;
  border: 1px solid #a0a0a0;
  background: #fff;
}
.float-box input {
  flex: 1;
  min-width: 0;
}
.float-box button {
  display: grid;
}

/* alert */
.emblem {
  position: absolute;
  right: 211px;
  bottom: -8px;
  z-index: 1;
  width: 72px;
  height: 82px;
}
.alert {
  position: absolute;
  right: 0;
  bottom: 2px;
  display: flex;
  align-items: flex-start;
  width: 202px;
  height: 71px;
  padding: 4px 3px 5px 2px;
  border: 1px solid #b0b0b0;
  border-right: 0;
  background: #efefef;
}
.alert .grip {
  margin: -2px 8px 0 0;
}
.alert-body {
  flex: 1;
  align-self: stretch;
  margin-right: 7px;
  padding-left: 9px;
  background: #fff;
}
.alert h3 {
  color: #006487;
  font-size: 18px;
  line-height: 24px;
}
.alert p {
  display: flex;
  align-items: center;
  gap: 11px;
  padding-top: 6px;
  white-space: nowrap;
}
.alert p svg {
  width: 14px;
  height: 14px;
  margin: -8px 0 0 1px;
}
.alert > button {
  display: grid;
  place-items: center;
  width: 24px;
  height: 24px;
  border: 1px solid #a0a0a0;
}
.alert > button svg {
  width: 14px;
  height: 14px;
}

/* status bar */
.status {
  display: grid;
  grid-template-columns: 648px auto 1fr;
  align-items: center;
  height: 21px;
  border-top: 1px solid #a0a0a0;
  font-size: 14px;
}
.status div {
  display: flex;
  justify-content: flex-end;
  gap: 4px;
  padding-right: 51px;
}
.status svg {
  width: 16px;
  height: 16px;
}
</style>
